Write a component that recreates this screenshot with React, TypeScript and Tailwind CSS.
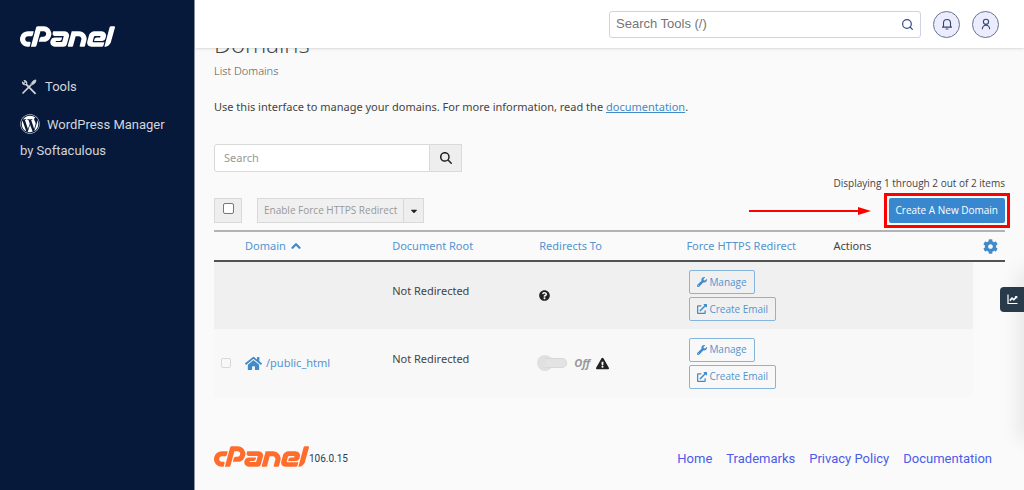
import React from "react";
import {
  FaCog,
  FaExclamationTriangle,
  FaExternalLinkAlt,
  FaHome,
  FaQuestionCircle,
  FaWordpress,
  FaWrench,
  FaCaretDown,
} from "react-icons/fa";
import { FaMagnifyingGlass } from "react-icons/fa6";
import { SiCpanel } from "react-icons/si";
import { ChevronUp, Search } from "lucide-react";

function Logo({ className }: { className: string }) {
  return (
    <SiCpanel
      viewBox="0 9.3 24 5.4"
      preserveAspectRatio="none"
      className={className}
      role="img"
      aria-label="cPanel"
    />
  );
}

function ToolsIcon() {
  return (
    <svg viewBox="0 0 16 16" className="size-4" fill="none" stroke="currentColor" aria-hidden="true">
      <path d="M5 5.2 14.6 14.8" strokeWidth="1.8" />
      <path d="M3.4 1.5a2.5 2.5 0 0 1 2 3.8 2.5 2.5 0 0 1-3.9-1.9l1.6 1 1.2-1.3z" strokeWidth="1.1" />
      <path d="M1.5 14.5 10.6 5.4" strokeWidth="1.6" />
      <path d="m10.2 4.4 2.3-2.8 2.5-.7-.6 2.6-2.8 2.3z" fill="currentColor" strokeWidth="0.8" />
    </svg>
  );
}

function BellIcon() {
  return (
    <svg viewBox="0 0 12 12" className="size-3" fill="none" stroke="currentColor" strokeWidth="1.1" aria-hidden="true">
      <path d="M2.5 9V5a3.5 3.5 0 0 1 7 0v4" />
      <path d="M1 9.1h10M4.6 11h2.8" />
    </svg>
  );
}

function UserIcon() {
  return (
    <svg viewBox="0 0 12 12" className="size-3" fill="none" stroke="currentColor" strokeWidth="1.1" aria-hidden="true">
      <circle cx="6" cy="3.8" r="2.6" />
      <path d="M2.3 11.2c.2-2.7 1.800-4 3.700-4s3.500 1.300 3.700 4" />
    </svg>
  );
}

function ChartIcon() {
  return (
    <svg viewBox="0 0 11 11" className="size-[11px] text-white" fill="none" stroke="currentColor" aria-hidden="true">
      <path d="M1 .5V9.500h9.500" strokeWidth="1.2" />
      <path d="m2.800 6.600 2.200-2.400 1.800 1.500 2.400-2.600" strokeWidth="1.6" />
      <path d="M7.600 2h2.700v2.700z" fill="currentColor" stroke="none" />
    </svg>
  );
}

function Sidebar() {
  return (
    <aside className="w-[195px] shrink-0 border-r border-[#8b93a3] bg-[#06193b] px-5 pt-[26px] text-[#d3d5da]">
      <Logo className="h-[21px] w-[95px] text-white" />
      <nav className="mt-[27px] font-['Roboto',sans-serif] text-[13px] leading-[26px]">
        <a href="#tools" className="flex items-center gap-2 pl-px">
          <ToolsIcon />
          Tools
        </a>
        <a href="#wordpress" className="mt-3 block">
          <FaWordpress className="mr-[7px] inline size-5 align-[-5px] text-white" />
          WordPress Manager by Softaculous
        </a>
      </nav>
    </aside>
  );
}

function Header() {
  const round =
    "flex size-[27px] items-center justify-center rounded-full border border-[#69748f] bg-[#ebecfd] text-[#35456f]";
  return (
    <header className="relative z-10 flex h-12 items-center justify-end bg-white pr-[25px] shadow-sm">
      <label className="flex h-[27px] w-[312px] items-center rounded-[3px] border border-[#cdd2e6] px-1.5">
        <input
          type="text"
          aria-label="Search Tools"
          placeholder="Search Tools (/)"
          className="min-w-0 flex-1 font-['Liberation_Sans',sans-serif] text-[13px] outline-none placeholder:text-[#757575]"
        />
        <Search className="size-[13px] text-[#2f4a85]" strokeWidth={2.2} />
      </label>
      <button type="button" aria-label="Notifications" className={`${round} ml-3`}>
        <BellIcon />
      </button>
      <button type="button" aria-label="Account" className={`${round} ml-3`}>
        <UserIcon />
      </button>
    </header>
  );
}

function RowActions() {
  const button =
    "flex h-6 items-center gap-0.5 rounded-[2px] border border-[#86b4dc] px-[7px] font-['Open_Sans',sans-serif] text-[10px] text-[#5494d0]";
  return (
    <div className="flex flex-col items-start gap-[3px] pl-[3px]">
      <button type="button" className={button}>
        <FaWrench className="size-2.5 text-[#428bca]" />
        Manage
      </button>
      <button type="button" className={button}>
        <FaExternalLinkAlt className="size-2.5 text-[#428bca]" />
        Create Email
      </button>
    </div>
  );
}

function DomainTable() {
  const head = "w-[18.6%] font-normal";
  const link = "text-[#5494d0]";
  return (
    <table className="mt-[7px] w-full table-fixed text-left text-[11px] text-[#444]">
      <thead>
        <tr className="h-[30px] border-t-2 border-b-2 border-t-[#b3b3b3] border-b-[#505254]">
          <th className="w-[31px]" aria-label="Select" />
          <th className={head}>
            <a href="#domain" className={`${link} flex items-center gap-[3px]`}>
              Domain <ChevronUp className="size-3.5 text-[#428bca]" strokeWidth={4} />
            </a>
          </th>
          <th className={head}><a href="#root" className={link}>Document Root</a></th>
          <th className={head}><a href="#redirects" className={link}>Redirects To</a></th>
          <th className={head}><a href="#https" className={link}>Force HTTPS Redirect</a></th>
          <th className="font-normal">Actions</th>
          <th className="w-8">
            <button type="button" aria-label="Table settings" className="ml-[10px] flex">
              <FaCog className="size-[15px] text-[#428bca]" />
            </button>
          </th>
        </tr>
      </thead>
      <tbody>
        <tr className="h-[68px]">
          <td className="bg-[#f0f0f0]" />
          <td className="bg-[#f0f0f0]" />
          <td className="bg-[#f0f0f0] pb-2">Not Redirected</td>
          <td className="bg-[#f0f0f0]">
            <FaQuestionCircle className="size-[11px] text-[#222]" />
          </td>
          <td className="bg-[#f0f0f0]"><RowActions /></td>
          <td className="bg-[#f0f0f0]" />
          <td />
        </tr>
        <tr className="h-[68px]">
          <td className="bg-[#f8f8f8]">
            <input
              type="checkbox"
              aria-label="Select /public_html"
              disabled
              className="ml-[7px] block size-2.5 appearance-none rounded-[2px] border border-[#d8d8d8]"
            />
          </td>
          <td className="bg-[#f8f8f8]">
            <a href="#public_html" className={`${link} flex items-center gap-1`}>
              <FaHome className="size-[17px] text-[#428bca]" />
              /public_html
            </a>
          </td>
          <td className="bg-[#f8f8f8] pb-2">Not Redirected</td>
          <td className="bg-[#f8f8f8]">
            <div className="flex items-center">
              <button type="button" role="switch" aria-checked="false" aria-label="Force HTTPS Redirect" className="-ml-0.5 flex h-4 w-[30px] items-center">
                <span className="size-4 shrink-0 rounded-full bg-[#e0e0e0]" />
                <span className="-ml-2 h-[10px] flex-1 rounded-r-full border border-[#d8d8d8] border-l-0 bg-[#e3e3e3]" />
              </button>
              <span className="ml-[7px] font-bold text-[#999] italic">Off</span>
              <FaExclamationTriangle className="ml-1.5 size-[13px] text-[#222]" />
            </div>
          </td>
          <td className="bg-[#f8f8f8]"><RowActions /></td>
          <td className="bg-[#f8f8f8]" />
          <td />
        </tr>
      </tbody>
    </table>
  );
}

function Toolbar() {
  return (
    <div className="flex h-[25px] items-center">
      <label className="flex h-[25px] w-7 justify-center border border-[#d9d9d9] bg-[#eee] pt-1">
        <input
          type="checkbox"
          aria-label="Select all"
          className="size-[11px] appearance-none rounded-[2px] border border-[#777] bg-white"
        />
      </label>
      <div className="ml-[15px] flex h-[25px] border border-[#d9d9d9] bg-[#f0f0f0] font-['Open_Sans',sans-serif]">
        <button type="button" className="px-1.5 text-[10px] text-[#999]">Enable Force HTTPS Redirect</button>
        <button type="button" aria-label="More actions" className="flex w-5 items-center justify-center border-l border-[#d9d9d9] bg-[#eee]">
          <FaCaretDown className="size-2.5 text-[#222]" />
        </button>
      </div>
      <svg viewBox="0 0 122 8" className="mr-[18px] ml-auto h-2 w-[122px]" aria-hidden="true">
        <path d="M0 4h112" stroke="#f00" strokeWidth="2" />
        <path d="M109 0l13 4-13 4z" fill="#f00" />
      </svg>
      <div className="relative">
        <button type="button" className="block h-[25px] rounded-[2px] bg-[#3988cf] px-[7px] font-['Open_Sans',sans-serif] text-[10px] text-white">
          Create A New Domain
        </button>
        <span className="pointer-events-none absolute -inset-[5px] border-[3px] border-[#f00]" />
      </div>
    </div>
  );
}

export default function App() {
  return (
    <div className="relative flex min-h-screen overflow-hidden bg-[#fafafa] font-['Noto_Sans',sans-serif]">
      <Sidebar />
      <div className="min-w-0 flex-1">
        <Header />
        <main className="pr-[19px] pl-[19px] text-[#444]">
          <h1 className="-mt-5 font-['Open_Sans',sans-serif] text-2xl leading-8 font-light">Domains</h1>
          <p className="mt-[3px] text-[11px] leading-4 font-light text-[#555]">List Domains</p>
          <p className="mt-5 text-[11px] leading-4">
            Use this interface to manage your domains. For more information, read the{" "}
            <a href="#documentation" className="text-[#428bca] underline">documentation</a>.
          </p>
          <form className="mt-[29px] flex h-7 w-[248px]">
            <input
              type="text"
              aria-label="Search"
              placeholder="Search"
              className="min-w-0 flex-1 rounded-l-[3px] border border-[#d9d9d9] bg-white px-[9px] text-[11px] placeholder:text-[#999]"
            />
            <button type="button" aria-label="Search domains" className="flex w-8 items-center justify-center border border-l-0 border-[#d9d9d9] bg-[#eee]">
              <FaMagnifyingGlass className="size-3 text-[#222]" />
            </button>
          </form>
          <p className="mt-[3px] text-right font-['Open_Sans',sans-serif] text-[10px] leading-4">Displaying 1 through 2 out of 2 items</p>
          <div className="mt-[7px]"><Toolbar /></div>
          <DomainTable />
        </main>
        <footer className="mt-12 flex items-center pr-8 pl-[19px] font-['Roboto',sans-serif]">
          <Logo className="h-[21px] w-[95px] text-[#ff6c2c]" />
          <span className="pt-1 text-[10px] text-[#293a5e]">106.0.15</span>
          <nav className="ml-auto flex gap-[14px] pt-1 text-[13px] text-[#4b5bea]">
            <a href="#home">Home</a>
            <a href="#trademarks">Trademarks</a>
            <a href="#privacy">Privacy Policy</a>
            <a href="#docs">Documentation</a>
          </nav>
        </footer>
      </div>
      <div className="absolute top-[270px] -right-2 h-[170px] w-2 shadow-[0_0_20px_rgba(0,0,0,0.2)]" />
      <button type="button" aria-label="Statistics" className="absolute top-[287px] right-0 flex h-[25px] w-6 items-center rounded-l-[4px] bg-[#293a4a] pl-[7px]">
        <ChartIcon />
      </button>
    </div>
  );
}
